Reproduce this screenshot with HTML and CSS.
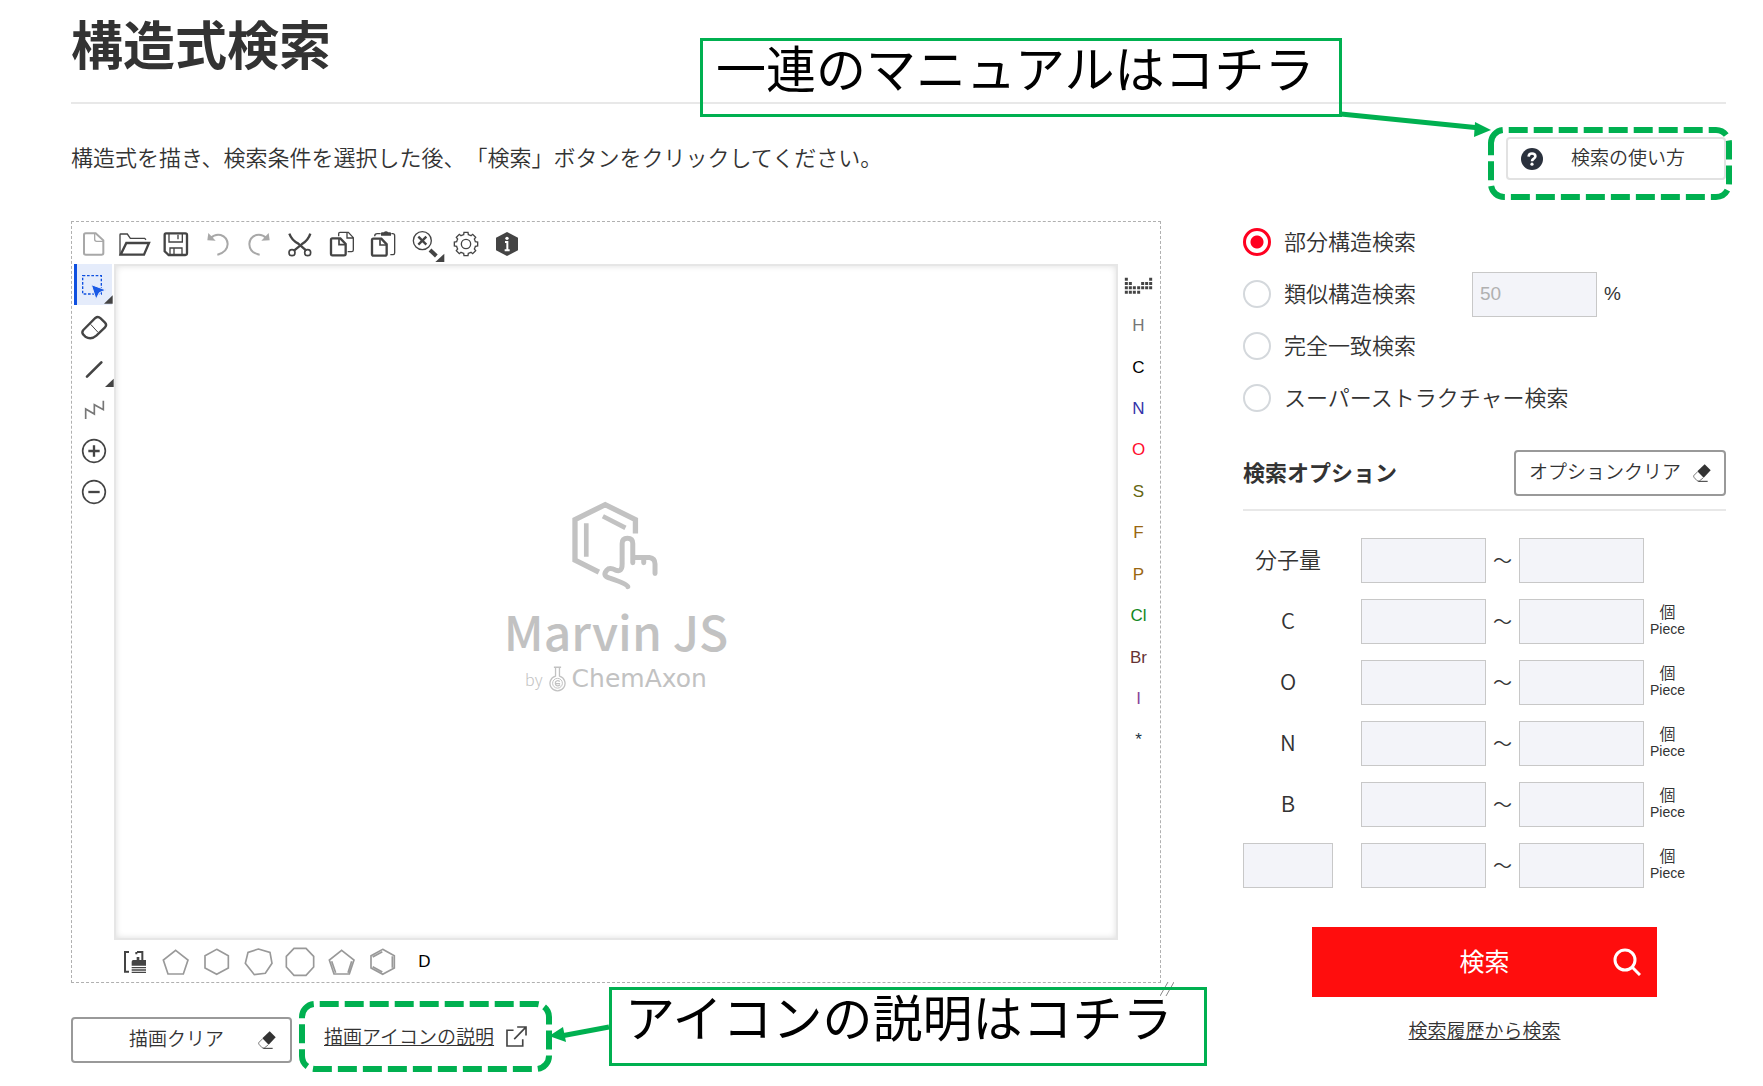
FILE: index.html
```html
<!DOCTYPE html>
<html lang="ja">
<head>
<meta charset="utf-8">
<meta name="viewport" content="width=device-width, initial-scale=1">
<title>構造式検索</title>
<link rel="stylesheet" href="styles.css">
</head>
<body>
<svg class="sprite" aria-hidden="true">
  <symbol id="i-clear" viewBox="0 0 54 54">
    <path d="M35 1L53 19L32 41L13 22Z" fill="#333"/>
    <path d="M13 24L3 34Q1 37 3 40L12 50Q15 52 19 51L30 42" fill="none" stroke="#333" stroke-width="2"/>
    <path d="M16 52H44" stroke="#333" stroke-width="3"/>
  </symbol>
</svg>
<main class="page">
  <h1 class="title">構造式検索</h1>

  <div class="intro">
    <p class="lead">構造式を描き、検索条件を選択した後、「検索」ボタンをクリックしてください。</p>
    <div class="help">
      <button type="button" class="help-button">
        <svg class="help-icon" viewBox="0 0 22 22"><circle cx="11" cy="11" r="11" fill="#2a313d"/><path d="M7.600 8.600Q7.800 5.500 11 5.500Q14.400 5.500 14.400 8.300Q14.400 10 12.400 11Q11 11.800 11 13.200" fill="none" stroke="#fff" stroke-width="2.600"/><circle cx="11" cy="16.200" r="1.600" fill="#fff"/></svg>
        <span class="caption">検索の使い方</span>
      </button>
      <div class="callout callout-manual">一連のマニュアルはコチラ</div>
      <svg class="mark mark-manual" viewBox="0 0 396 94">
        <path d="M1 4L140 18" stroke="#00b050" stroke-width="5"/>
        <path d="M151 20L135 12L134 27Z" fill="#00b050"/>
        <path d="M151 33A13 13 0 0 1 164 20H376A13 13 0 0 1 389 33V74A13 13 0 0 1 376 87H164A13 13 0 0 1 151 74Z" fill="none" stroke="#00b050" stroke-width="6" stroke-dasharray="19 6"/>
      </svg>
    </div>
  </div>

  <div class="columns">
    <section class="draw">
      <div class="editor">
        <div class="bar bar-top">
          <button type="button" class="tool" aria-label="新規"><svg viewBox="0 0 90 90" class="dim"><path d="M20 13H50L73 34V72a5 5 0 0 1-5 5H20a5 5 0 0 1-5-5V18a5 5 0 0 1 5-5z" stroke-width="6"/><path d="M47 13v18a6 6 0 0 0 6 6h20" stroke-width="4"/></svg></button>
          <button type="button" class="tool" aria-label="開く"><svg viewBox="0 0 90 90"><path d="M0 78V17q0-2 2-2h20l9 13h43l4 4" stroke-width="4"/><path d="M19 42H87L72 77H2Z" stroke-width="7"/></svg></button>
          <button type="button" class="tool" aria-label="保存"><svg viewBox="0 0 90 90"><path d="M15 13H73q5 0 5 5V73q0 5-5 5H23L11 67V18q0-5 4-5z" stroke-width="7"/><path d="M24 14V39H64V14M51 17V31M27 77V57H63V77M39 59V76" stroke-width="4"/></svg></button>
          <button type="button" class="tool" aria-label="元に戻す"><svg viewBox="0 0 90 90" class="dim"><path d="M23 27Q36 14 53 18Q73 25 74 45Q73 70 43 77" stroke-width="6"/><path class="solid" d="M16 12L38 35L13 34Z"/></svg></button>
          <button type="button" class="tool" aria-label="やり直し"><svg viewBox="0 0 90 90" class="dim"><path d="M67 27Q54 14 37 18Q17 25 16 45Q17 72 47 77" stroke-width="6"/><path class="solid" d="M74 12L52 35L77 34Z"/></svg></button>
          <button type="button" class="tool" aria-label="切り取り"><svg viewBox="0 0 90 90"><path d="M13 14Q20 34 40 44L64 65M76 14Q70 34 50 46L27 65" stroke-width="7"/><circle cx="21" cy="71" r="9" stroke-width="5"/><circle cx="68" cy="71" r="9" stroke-width="5"/></svg></button>
          <button type="button" class="tool" aria-label="コピー"><svg viewBox="0 0 90 90"><path d="M35 22V14q0-4 4-4H64L79 26V63q0 5-5 5H62M60 11v16h18" stroke-width="4"/><path d="M16 28H40L56 45V74q0 5-5 5H16q-4 0-4-5V32q0-4 4-4z" stroke-width="7"/><path d="M36 30v17h18" stroke-width="5"/></svg></button>
          <button type="button" class="tool" aria-label="貼り付け"><svg viewBox="0 0 90 90"><path d="M20 22q0-8 8-8h10M70 14h4q6 0 6 6V72q0 5-5 5H67" stroke-width="4"/><path class="solid" d="M39 20V12q0-2 3-2h5q7-7 14 0h5q3 0 3 2v8z"/><path d="M16 29H40L56 46V75q0 5-5 5H16q-4 0-4-5V33q0-4 4-4z" stroke-width="7"/><path d="M36 31v17h18" stroke-width="5"/></svg></button>
          <button type="button" class="tool" aria-label="表示リセット"><svg viewBox="0 0 90 90"><circle cx="37" cy="35" r="27" stroke-width="4"/><path d="M25 23L49 47M49 23L25 47" stroke-width="7"/><path d="M60 63L79 81" stroke-width="12"/><path class="solid" d="M76 99H103V74Z"/></svg></button>
          <button type="button" class="tool" aria-label="設定"><svg viewBox="0 0 90 90"><path d="M38 17L39 10H51L52 17Q56 18 60 20L65 16L74 25L70 30Q72 34 73 38L80 39V51L73 52Q72 56 70 60L74 65L65 74L60 70Q56 72 52 73L51 80H39L38 73Q34 72 30 70L25 74L16 65L20 60Q18 56 17 52L10 51V39L17 38Q18 34 20 30L16 25L25 16L30 20Q34 18 38 17Z" stroke-width="4"/><circle cx="45" cy="45" r="14" stroke-width="4"/></svg></button>
          <button type="button" class="tool" aria-label="情報"><svg viewBox="0 0 90 90"><path class="solid" d="M45 9L78 26V64L45 81L12 64V26Z"/><path d="M39 39H46V63M38 64H53" stroke="#fff" stroke-width="6"/><circle cx="45" cy="28" r="5" fill="#fff" stroke="none"/></svg></button>
        </div>

        <div class="bar bar-left">
          <button type="button" class="tool is-active" aria-label="選択"><svg viewBox="0 0 90 90"><path d="M14 17H70V72H14Z" stroke="#0f50e0" stroke-width="4" stroke-dasharray="8 5"/><path d="M40 44L84 60L64 68L54 88Z" fill="#1a5ae6" stroke="#e5ecfb" stroke-width="3"/><path class="solid" d="M78 101H104V76Z"/></svg></button>
          <button type="button" class="tool" aria-label="消しゴム"><svg viewBox="0 0 90 90"><path d="M13 51L49 15Q57 9 65 16L78 29Q85 36 78 43L52 68Q36 82 19 71L13 65Q7 58 13 51Z" stroke-width="7"/><path d="M35 34L57 58" stroke-width="3"/></svg></button>
          <button type="button" class="tool" aria-label="結合"><svg viewBox="0 0 90 90"><path d="M24 68L67 25" stroke-width="8" stroke-linecap="round"/><path class="solid" d="M78 99H104V74Z"/></svg></button>
          <button type="button" class="tool" aria-label="鎖"><svg viewBox="0 0 90 90"><path d="M20 72V42L46 57V29L73 44V17" stroke="#777" stroke-width="5"/></svg></button>
          <button type="button" class="tool" aria-label="電荷プラス"><svg viewBox="0 0 90 90"><circle cx="45" cy="45" r="34" stroke-width="5"/><path d="M28 45H62M45 28V62" stroke-width="7"/></svg></button>
          <button type="button" class="tool" aria-label="電荷マイナス"><svg viewBox="0 0 90 90"><circle cx="45" cy="45" r="34" stroke-width="5"/><path d="M28 45H62" stroke-width="7"/></svg></button>
        </div>

        <div class="canvas">
          <svg class="logo-hand" viewBox="0 0 260 268" fill="none" stroke="#c2c2c2" stroke-width="16">
            <path d="M190 98V56L99 11L8 56V178L80 214"/>
            <path d="M42 67V168M92 46L160 81" stroke-width="14"/>
            <path d="M167 258Q165 250 115 233Q88 227 104 208Q112 199 130 208Q150 216 150 190V128Q150 112 166 112Q182 112 182 128V186M182 170H232Q249 172 249 190V218M215 172V186" stroke-width="15" stroke-linecap="round" stroke-linejoin="round"/>
          </svg>
          <div class="logo-name">Marvin JS</div>
          <div class="logo-maker">
            <span class="logo-by">by</span>
            <svg class="logo-flask" viewBox="0 0 52 78" fill="none" stroke="#c2c2c2" stroke-width="4"><path d="M15 3H37M20 3V30A23 23 0 1 0 32 30V3"/><circle cx="26" cy="52" r="15" stroke-width="3"/><path d="M33 47Q26 41 20 48Q18 59 26 60Q31 60 34 57M19 53H34" stroke-width="4"/></svg>
            <span>ChemAxon</span>
          </div>
        </div>

        <div class="bar bar-right">
          <button type="button" class="tool" aria-label="周期表"><svg viewBox="0 0 90 90"><g stroke-width="9" stroke-dasharray="9 4"><path d="M7 23V73M19 36V73M31 49V73M44 49V73M56 36V60M68 36V60M80 23V60"/></g></svg></button>
          <button type="button" class="tool atom-h">H</button>
          <button type="button" class="tool atom-c">C</button>
          <button type="button" class="tool atom-n">N</button>
          <button type="button" class="tool atom-o">O</button>
          <button type="button" class="tool atom-s">S</button>
          <button type="button" class="tool atom-f">F</button>
          <button type="button" class="tool atom-f">P</button>
          <button type="button" class="tool atom-cl">Cl</button>
          <button type="button" class="tool atom-br">Br</button>
          <button type="button" class="tool atom-i">I</button>
          <button type="button" class="tool atom-any">*</button>
        </div>

        <div class="bar bar-bottom">
          <button type="button" class="tool" aria-label="テンプレート"><svg viewBox="0 0 90 90"><path d="M27 15H15V74H27M51 15H67V40M49 15V22" stroke-width="6"/><path class="solid" d="M35 56V44q0-5 5-5h10V30h8v9h20V56z"/><path d="M35 62H78M35 69H78M35 76H78" stroke-width="4"/></svg></button>
          <button type="button" class="tool" aria-label="五員環"><svg viewBox="0 0 90 90" class="ring"><path d="M44 10L81 39L67 81H21L7 39Z"/></svg></button>
          <button type="button" class="tool" aria-label="六員環"><svg viewBox="0 0 90 90" class="ring"><path d="M44 7L79 26V63L44 82L9 63V26Z"/></svg></button>
          <button type="button" class="tool" aria-label="七員環"><svg viewBox="0 0 90 90" class="ring"><path d="M43 6L78 16L84 49L64 79L31 83L4 49L12 16Z"/></svg></button>
          <button type="button" class="tool" aria-label="八員環"><svg viewBox="0 0 90 90" class="ring"><path d="M27 4H63L86 28V60L63 85H27L4 60V28Z"/></svg></button>
          <button type="button" class="tool" aria-label="シクロペンタジエン"><svg viewBox="0 0 90 90" class="ring"><path d="M44 10L81 39L67 81H21L7 39ZM14 43L26 77M74 43L63 77"/></svg></button>
          <button type="button" class="tool" aria-label="ベンゼン"><svg viewBox="0 0 90 90" class="ring"><path d="M44 7L79 26V63L44 82L9 63V26ZM14 30L43 14M14 59L43 75M73 28V62"/></svg></button>
          <button type="button" class="tool atom-c">D</button>
        </div>
        <svg class="grip" viewBox="0 0 14 14"><path d="M0 14L8 0M6 14L14 0" stroke="#888" stroke-width="1"/></svg>
      </div>

      <div class="draw-actions">
        <button type="button" class="outline-button draw-clear"><span class="caption">描画クリア</span><svg class="clear-icon"><use href="#i-clear"/></svg></button>
        <div class="icon-guide">
          <a href="#icons" class="link">描画アイコンの説明</a>
          <svg class="external-icon" viewBox="0 0 64 64" fill="none" stroke="#444" stroke-width="5"><path d="M23 13H3V61H51V40M34 3H61V29M60 4L25 40"/></svg>
          <svg class="mark mark-icons" viewBox="0 0 313 74">
            <path d="M310 27L262 36" stroke="#00b050" stroke-width="5"/>
            <path d="M250 36L264 27L267 42Z" fill="#00b050"/>
            <path d="M3 17A13 13 0 0 1 16 4H237A13 13 0 0 1 250 17V56A13 13 0 0 1 237 69H16A13 13 0 0 1 3 56Z" fill="none" stroke="#00b050" stroke-width="6" stroke-dasharray="19 6"/>
          </svg>
          <div class="callout callout-icons">アイコンの説明はコチラ</div>
        </div>
      </div>
    </section>

    <form class="search">
      <div class="modes">
        <div class="mode"><label class="mode-label"><input type="radio" name="mode" checked><span class="caption">部分構造検索</span></label></div>
        <div class="mode">
          <label class="mode-label"><input type="radio" name="mode"><span class="caption">類似構造検索</span></label>
          <input type="text" class="field" id="similarity" aria-label="類似度" placeholder="50">
          <label for="similarity" class="percent">%</label>
        </div>
        <div class="mode"><label class="mode-label"><input type="radio" name="mode"><span class="caption">完全一致検索</span></label></div>
        <div class="mode"><label class="mode-label"><input type="radio" name="mode"><span class="caption">スーパーストラクチャー検索</span></label></div>
      </div>

      <div class="options-head">
        <h2 class="options-title caption">検索オプション</h2>
        <button type="button" class="outline-button option-clear"><span class="caption">オプションクリア</span><svg class="clear-icon"><use href="#i-clear"/></svg></button>
      </div>

      <div class="options">
        <div class="option"><label for="mw" class="option-name">分子量</label><input type="text" class="field" id="mw"><span class="tilde">～</span><input type="text" class="field" aria-label="分子量 上限"></div>
        <div class="option"><label for="nc" class="option-name">C</label><input type="text" class="field" id="nc"><span class="tilde">～</span><input type="text" class="field" aria-label="C 上限"><span class="unit"><span class="unit-ja">個</span>Piece</span></div>
        <div class="option"><label for="no" class="option-name">O</label><input type="text" class="field" id="no"><span class="tilde">～</span><input type="text" class="field" aria-label="O 上限"><span class="unit"><span class="unit-ja">個</span>Piece</span></div>
        <div class="option"><label for="nn" class="option-name">N</label><input type="text" class="field" id="nn"><span class="tilde">～</span><input type="text" class="field" aria-label="N 上限"><span class="unit"><span class="unit-ja">個</span>Piece</span></div>
        <div class="option"><label for="nb" class="option-name">B</label><input type="text" class="field" id="nb"><span class="tilde">～</span><input type="text" class="field" aria-label="B 上限"><span class="unit"><span class="unit-ja">個</span>Piece</span></div>
        <div class="option"><input type="text" class="field field-name" aria-label="元素"><input type="text" class="field" aria-label="下限"><span class="tilde">～</span><input type="text" class="field" aria-label="上限"><span class="unit"><span class="unit-ja">個</span>Piece</span></div>
      </div>

      <button type="submit" class="submit"><span class="caption">検索</span><svg class="submit-icon" viewBox="0 0 28 28" fill="none" stroke="#fff" stroke-width="3"><circle cx="12" cy="12" r="10"/><path d="M19 19L27 27"/></svg></button>
      <a href="#history" class="link history">検索履歴から検索</a>
    </form>
  </div>
</main>
</body>
</html>
```
FILE: styles.css
```css
* { box-sizing: border-box; }

body {
  margin: 0;
  background: #fff;
  color: #333;
  font: 350 22px/28px "Noto Sans CJK JP", "Noto Sans CJK JP DemiLight", sans-serif;
  text-spacing-trim: space-all;
}

button, input { font: inherit; color: inherit; margin: 0; }
button { background: none; border: 0; padding: 0; cursor: pointer; }
.sprite { display: none; }
.caption { padding-bottom: 4px; }

.page { padding: 0 37px 22px 71px; }

.title {
  margin: 0;
  padding: 13px 0 29px;
  border-bottom: 2px solid #e8e8e8;
  font-size: 52px;
  font-weight: 700;
  line-height: 60px;
}

.intro {
  display: flex;
  justify-content: space-between;
  align-items: center;
  margin: 33px 0 41px;
}
.lead { margin: 0; padding-bottom: 5px; }

.help { position: relative; }
.help-button {
  display: flex;
  align-items: center;
  width: 220px;
  height: 43px;
  padding-left: 13px;
  border: 2px solid #e2e2e2;
  border-radius: 4px;
  font-size: 19px;
}
.help-icon { width: 22px; height: 22px; margin-right: 28px; }

/* Green guide annotations lie over the page */
.mark { position: absolute; pointer-events: none; }
.mark-manual { left: -166px; top: -27px; width: 396px; height: 94px; }
.mark-icons { left: -25px; top: -20px; width: 313px; height: 74px; }
.callout {
  position: absolute;
  height: 79px;
  padding-left: 13px;
  border: 3px solid #00b050;
  color: #000;
  font-size: 50px;
  font-weight: 400;
  line-height: 50px;
  white-space: nowrap;
}
.callout-manual { right: 384px; top: -99px; width: 642px; }
.callout-icons { left: 285px; top: -33px; width: 598px; }

.columns {
  display: grid;
  grid-template-columns: minmax(0, 1fr) 483px;
  gap: 82px;
  align-items: start;
}

.editor {
  position: relative;
  display: grid;
  grid-template: "top top top" 41px "left canvas right" auto "bottom bottom bottom" 41px / 41px minmax(0, 1fr) 41px;
  padding: 1px;
  border: 1px dashed #b0b0b0;
}
.bar { display: flex; }
.bar-top { grid-area: top; width: 455px; }
.bar-left { grid-area: left; flex-direction: column; height: 249px; }
.bar-right { grid-area: right; flex-direction: column; height: 497px; }
.bar-bottom { grid-area: bottom; width: 331px; margin-left: 41px; padding-top: 3px; }

.tool {
  flex: 1;
  display: flex;
  align-items: center;
  justify-content: center;
  font: 17px/20px "Liberation Sans", sans-serif;
}
.tool svg {
  width: 30px;
  height: 30px;
  overflow: visible;
  fill: none;
  stroke: #444;
}
.tool .solid { fill: #444; stroke: none; }
.tool .dim { stroke: #a8a8a8; }
.tool .dim .solid { fill: #a8a8a8; }
.tool .ring { stroke: #999; stroke-width: 5px; }
.tool.is-active { margin: 0 2px 2px 1px; background: #e5ecfb; box-shadow: inset 3px 0 #0f50e0; }

.atom-h { color: #777; }
.atom-c { color: #000; }
.atom-n { color: #3333aa; }
.atom-o { color: #ff0d2d; }
.atom-s { color: #666611; }
.atom-f { color: #996611; }
.atom-cl { color: #118822; }
.atom-br { color: #663333; }
.atom-i { color: #884499; }
.atom-any { color: #223344; }

.canvas {
  grid-area: canvas;
  display: flex;
  flex-direction: column;
  align-items: center;
  justify-content: center;
  min-height: 676px;
  padding-bottom: 9px;
  border: 2px solid #e6e6e6;
  box-shadow: inset 0 0 6px #ddd;
  color: #c2c2c2;
}
.logo-hand { width: 87px; height: 89px; margin-right: 2px; }
.logo-name { margin-top: 10px; font-size: 48px; font-weight: 500; line-height: 60px; }
.logo-maker {
  display: flex;
  align-items: center;
  gap: 6px;
  margin-top: 3px;
  font: 25px/32px "DejaVu Sans", sans-serif;
}
.logo-by { font: 300 16px/24px "Noto Sans CJK JP", sans-serif; }
.logo-flask { width: 17px; height: 26px; }

.grip { position: absolute; right: -14px; bottom: -14px; width: 14px; height: 14px; }

.draw-actions { display: flex; align-items: center; margin-top: 34px; }
.outline-button {
  display: flex;
  align-items: center;
  height: 46px;
  border: 2px solid #999;
  border-radius: 4px;
  font-size: 19px;
}
.clear-icon { width: 18px; height: 18px; }
.draw-clear { width: 221px; justify-content: space-between; padding: 0 14px 0 56px; }

.link { color: #333; font-size: 19px; text-decoration: underline; }
.icon-guide {
  position: relative;
  display: flex;
  align-items: center;
  gap: 12px;
  height: 32px;
  margin: 0 0 8px 32px;
}
.external-icon { width: 21px; height: 21px; }

.search { display: flex; flex-direction: column; }
.modes { display: grid; gap: 24px; padding-top: 7px; }
.mode { display: flex; align-items: center; height: 28px; }
.mode-label { display: flex; align-items: center; gap: 13px; min-width: 229px; white-space: nowrap; }
.mode-label input {
  appearance: none;
  width: 28px;
  height: 28px;
  border: 2px solid #d4d8dc;
  border-radius: 50%;
  background: #fff;
}
.mode-label input:checked {
  border: 3px solid #ff0020;
  background: radial-gradient(circle, #ff0020 6px, #fff 7px);
}
.percent { margin-left: 7px; font: 19px/24px "Liberation Sans", sans-serif; }

.field {
  width: 125px;
  height: 45px;
  padding: 0 7px;
  border: 1px solid #c8c8c8;
  border-radius: 0;
  background: #f3f4f9;
  font: 19px/24px "Liberation Sans", sans-serif;
}
.field::placeholder { color: #b0b0b0; opacity: 1; }

.options-head {
  display: flex;
  align-items: center;
  justify-content: space-between;
  margin-top: 38px;
  padding-bottom: 13px;
  border-bottom: 2px solid #e8e8e8;
}
.options-title { margin: 0; font-size: 22px; font-weight: 700; }
.option-clear { width: 212px; justify-content: space-between; padding: 0 13px; }

.options { display: grid; gap: 16px; margin-top: 27px; }
.option { display: flex; align-items: center; }
.option-name { width: 90px; margin-right: 28px; padding-bottom: 6px; text-align: center; }
.field-name { width: 90px; margin-right: 28px; }
.tilde { width: 33px; padding-bottom: 2px; font-size: 19px; text-align: center; }
.unit { margin-left: 6px; padding-bottom: 5px; font: 14px/16px "Liberation Sans", sans-serif; text-align: center; }
.unit-ja { display: block; font: 350 16px/20px "Noto Sans CJK JP", sans-serif; }

.submit {
  display: grid;
  grid-template-columns: 1fr auto 1fr;
  align-items: center;
  align-self: center;
  width: 345px;
  height: 70px;
  margin-top: 39px;
  padding: 0 16px;
  background: #ff0d0d;
  color: #fff;
  font-size: 25px;
  font-weight: 400;
}
.submit span { grid-column: 2; }
.submit-icon { justify-self: end; width: 28px; height: 28px; }
.history { align-self: center; margin-top: 19px; }
```
